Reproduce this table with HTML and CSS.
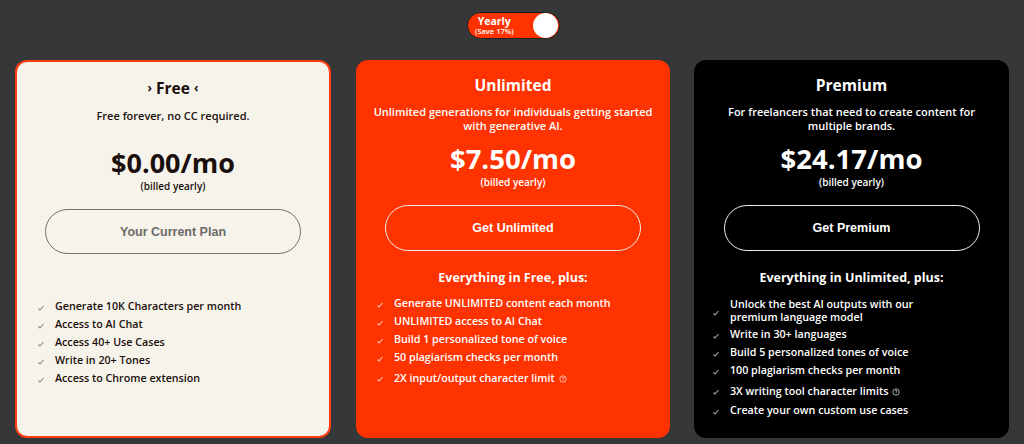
FILE: index.html
```html
<!DOCTYPE html>
<html>
<head>
<meta charset="utf-8">
<link rel="stylesheet" href="styles.css">
</head>
<body>
<div class="page">
  <div class="toggle-row">
    <div class="toggle">
      <div class="toggle-text"><span class="t1">Yearly</span><span class="t2">(Save 17%)</span></div>
      <div class="knob"></div>
    </div>
  </div>
  <div class="cards">
    <div class="card free">
      <h2 class="title"><span class="chev">›</span> Free <span class="chev">‹</span></h2>
      <p class="sub">Free forever, no CC required.</p>
      <div class="price free-price">$0.00/mo</div>
      <div class="billed">(billed yearly)</div>
      <div class="btn btn-free">Your Current Plan</div>
      <ul class="features free-features">
        <li><svg class="chk" viewBox="0 0 8 8"><path d="M1.5 4.5 L3 6 L6.5 2"/></svg>Generate 10K Characters per month</li>
        <li><svg class="chk" viewBox="0 0 8 8"><path d="M1.5 4.5 L3 6 L6.5 2"/></svg>Access to AI Chat</li>
        <li><svg class="chk" viewBox="0 0 8 8"><path d="M1.5 4.5 L3 6 L6.5 2"/></svg>Access 40+ Use Cases</li>
        <li><svg class="chk" viewBox="0 0 8 8"><path d="M1.5 4.5 L3 6 L6.5 2"/></svg>Write in 20+ Tones</li>
        <li><svg class="chk" viewBox="0 0 8 8"><path d="M1.5 4.5 L3 6 L6.5 2"/></svg>Access to Chrome extension</li>
      </ul>
    </div>
    <div class="card unlimited">
      <h2 class="title">Unlimited</h2>
      <p class="sub">Unlimited generations for individuals getting started with generative AI.</p>
      <div class="price">$7.50/mo</div>
      <div class="billed">(billed yearly)</div>
      <div class="btn btn-light">Get Unlimited</div>
      <h3 class="plus">Everything in Free, plus:</h3>
      <ul class="features">
        <li><svg class="chk" viewBox="0 0 8 8"><path d="M1.5 4.5 L3 6 L6.5 2"/></svg>Generate UNLIMITED content each month</li>
        <li><svg class="chk" viewBox="0 0 8 8"><path d="M1.5 4.5 L3 6 L6.5 2"/></svg>UNLIMITED access to AI Chat</li>
        <li><svg class="chk" viewBox="0 0 8 8"><path d="M1.5 4.5 L3 6 L6.5 2"/></svg>Build 1 personalized tone of voice</li>
        <li><svg class="chk" viewBox="0 0 8 8"><path d="M1.5 4.5 L3 6 L6.5 2"/></svg>50 plagiarism checks per month</li>
        <li class="tall"><svg class="chk" viewBox="0 0 8 8"><path d="M1.5 4.5 L3 6 L6.5 2"/></svg>2X input/output character limit <svg class="info" viewBox="0 0 10 10"><circle cx="5" cy="5" r="4"/><path d="M3.8 4 Q4 2.8 5 2.8 Q6.2 2.8 6.2 3.9 Q6.2 4.6 5 5.2 L5 6"/><circle class="dot" cx="5" cy="7.4" r="0.5"/></svg></li>
      </ul>
    </div>
    <div class="card premium">
      <h2 class="title">Premium</h2>
      <p class="sub">For freelancers that need to create content for multiple brands.</p>
      <div class="price">$24.17/mo</div>
      <div class="billed">(billed yearly)</div>
      <div class="btn btn-light">Get Premium</div>
      <h3 class="plus">Everything in Unlimited, plus:</h3>
      <ul class="features">
        <li class="two"><svg class="chk" viewBox="0 0 8 8"><path d="M1.5 4.5 L3 6 L6.5 2"/></svg><span>Unlock the best AI outputs with our premium language model</span></li>
        <li><svg class="chk" viewBox="0 0 8 8"><path d="M1.5 4.5 L3 6 L6.5 2"/></svg>Write in 30+ languages</li>
        <li><svg class="chk" viewBox="0 0 8 8"><path d="M1.5 4.5 L3 6 L6.5 2"/></svg>Build 5 personalized tones of voice</li>
        <li><svg class="chk" viewBox="0 0 8 8"><path d="M1.5 4.5 L3 6 L6.5 2"/></svg>100 plagiarism checks per month</li>
        <li class="tall"><svg class="chk" viewBox="0 0 8 8"><path d="M1.5 4.5 L3 6 L6.5 2"/></svg>3X writing tool character limits <svg class="info" viewBox="0 0 10 10"><circle cx="5" cy="5" r="4"/><path d="M3.8 4 Q4 2.8 5 2.8 Q6.2 2.8 6.2 3.9 Q6.2 4.6 5 5.2 L5 6"/><circle class="dot" cx="5" cy="7.4" r="0.5"/></svg></li>
        <li><svg class="chk" viewBox="0 0 8 8"><path d="M1.5 4.5 L3 6 L6.5 2"/></svg>Create your own custom use cases</li>
      </ul>
    </div>
  </div>
</div>
</body>
</html>
```

FILE: styles.css
```css
* { box-sizing: border-box; }
html, body { margin: 0; padding: 0; }
body {
  background: #363739;
  font-family: "Open Sans", "Noto Sans", sans-serif;
  width: 1024px;
  height: 444px;
  overflow: hidden;
}
.page { padding: 12px 16px 0 15px; }
.toggle-row { display: flex; justify-content: center; padding-left: 4px; }
.toggle {
  width: 93px;
  height: 27px;
  background: #ff3300;
  border-radius: 14px;
  display: flex;
  align-items: center;
  justify-content: space-between;
  padding: 0 1px 0 7px;
  border: 1px solid #1f1f1f;
}
.toggle-text {
  display: flex; flex-direction: column; align-items: center;
  color: #fff; line-height: 1;
}
.t1 { font-size: 10.5px; font-weight: 700; }
.t2 { font-size: 7.5px; font-weight: 600; margin-top: 2px; }
.knob { width: 25px; height: 25px; border-radius: 50%; background: #fff; }

.cards {
  display: grid;
  grid-template-columns: 316px 315px 315px;
  column-gap: 24px;
  margin-top: 21px;
}
.card {
  height: 378px;
  border-radius: 12px;
  padding: 14px 0 0;
  display: flex;
  flex-direction: column;
  align-items: center;
  text-align: center;
}
.free { background: #f6f3ea; border: 2px solid #ff3d12; color: #1a0f0c; padding-top: 15px; }
.unlimited { background: #ff3300; color: #fff; margin-left: 1px; }
.premium { background: #000; color: #fff; }
.title { margin: 0; font-size: 15.5px; font-weight: 700; line-height: 22px; }
.chev { font-size: 12px; font-weight: 700; vertical-align: 2px; }
.sub { margin: 9px 0 0; font-size: 11px; font-weight: 600; line-height: 14px; padding: 0 12px; }
.premium .sub { padding: 0 22px; }
.free .sub { margin-top: 10px; }
.price { font-size: 27.5px; font-weight: 700; line-height: 32px; margin-top: 10px; }
.free-price { margin-top: 24px; font-size: 27px; }
.billed { font-size: 10px; font-weight: 600; line-height: 13px; margin-top: 1px; }
.btn {
  width: 256px;
  height: 46px;
  border-radius: 23px;
  margin-top: 16px;
  display: flex; align-items: center; justify-content: center;
  font-family: "Liberation Sans", Arial, sans-serif;
  font-weight: 700;
  font-size: 12.5px;
}
.btn-free { border: 1.5px solid #6f6f6f; color: #6b6b6b; height: 45px; margin-top: 16px; }
.btn-light { border: 1.5px solid #f2ece6; color: #fff; }
.plus { margin: 19px 0 0; font-size: 12.5px; font-weight: 700; line-height: 16px; }
.features {
  list-style: none;
  margin: 8px 0 0;
  padding: 0 0 0 20px;
  align-self: stretch;
  text-align: left;
}
.free-features { margin-top: 43px; }
.features li {
  display: flex;
  align-items: center;
  font-size: 10.7px;
  font-weight: 600;
  line-height: 18px;
  height: 18px;
}
.features li.tall { height: 21px; margin-top: 1px; }
.features li.two { height: 28px; line-height: 13px; margin-top: 3px; }
.features li.two span { display: block; width: 215px; }
.chk {
  width: 8px; height: 8px;
  margin-right: 10px;
  flex: none;
  margin-top: 3px;
  fill: none;
  stroke: #888;
  stroke-width: 1.1;
}
.unlimited .chk { stroke: #ffc9b5; }
.premium .chk { stroke: #aaa; }
.premium .features { padding-left: 18px; }
.premium .features li.two .chk { margin-right: 8px; }
.premium .features li.two span { padding-left: 2px; }
.info { width: 8px; height: 8px; margin-left: 4px; margin-top: 2px; fill: none; stroke: currentColor; stroke-width: 1; opacity: 0.8; }
.info .dot { fill: currentColor; stroke: none; }
```
